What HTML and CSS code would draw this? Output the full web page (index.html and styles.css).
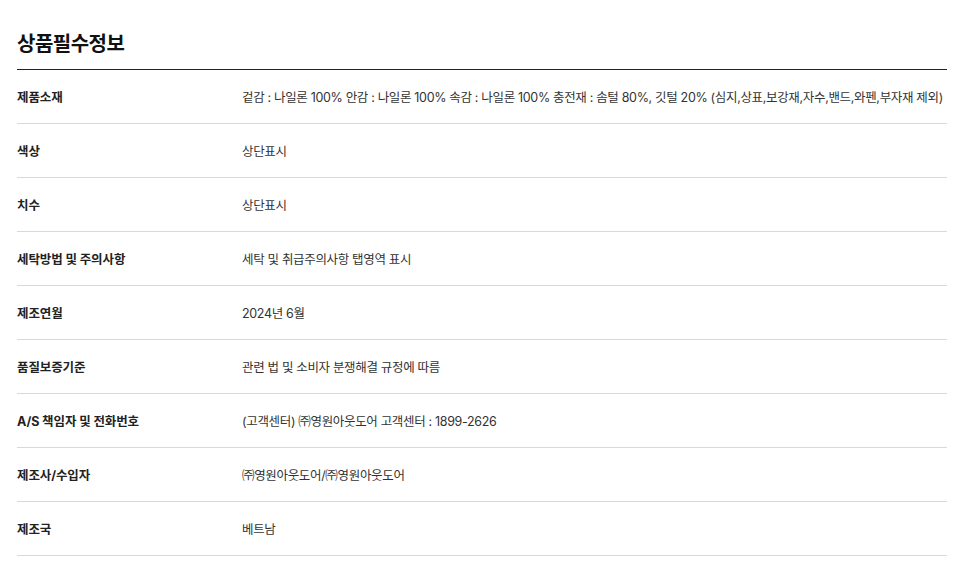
FILE: index.html
```html
<!DOCTYPE html>
<html lang="ko">
<head>
<meta charset="utf-8">
<link rel="stylesheet" href="styles.css">
</head>
<body>
<section class="info">
  <h2 class="title">상품필수정보</h2>
  <div class="rows">
    <div class="row"><div class="label">제품소재</div><div class="value">겉감 : 나일론 100% 안감 : 나일론 100% 속감 : 나일론 100% 충전재 : 솜털 80%, 깃털 20% (심지,상표,보강재,자수,밴드,와펜,부자재 제외)</div></div>
    <div class="row"><div class="label">색상</div><div class="value">상단표시</div></div>
    <div class="row"><div class="label">치수</div><div class="value">상단표시</div></div>
    <div class="row"><div class="label">세탁방법 및 주의사항</div><div class="value">세탁 및 취급주의사항 탭영역 표시</div></div>
    <div class="row"><div class="label">제조연월</div><div class="value">2024년 6월</div></div>
    <div class="row"><div class="label">품질보증기준</div><div class="value">관련 법 및 소비자 분쟁해결 규정에 따름</div></div>
    <div class="row"><div class="label">A/S 책임자 및 전화번호</div><div class="value">(고객센터) ㈜영원아웃도어 고객센터 : 1899-2626</div></div>
    <div class="row"><div class="label">제조사/수입자</div><div class="value">㈜영원아웃도어/㈜영원아웃도어</div></div>
    <div class="row"><div class="label">제조국</div><div class="value">베트남</div></div>
  </div>
</section>
</body>
</html>
```

FILE: styles.css
```css
html, body {
  margin: 0;
  padding: 0;
  background: #fff;
}
body {
  font-family: "Inter", "Noto Sans CJK KR", sans-serif;
  color: #222;
}
.info {
  width: 930px;
  margin-left: 17px;
}
.title {
  margin: 0;
  padding: 31px 0 12px;
  font-size: 20px;
  line-height: 26px;
  font-weight: 700;
  letter-spacing: -0.5px;
  color: #111;
  border-bottom: 1px solid #222;
}
.row {
  display: flex;
  align-items: center;
  height: 53px;
  border-bottom: 1px solid #d9d9d9;
}
.label {
  width: 225px;
  flex: none;
  font-size: 12.5px;
  font-weight: 700;
  letter-spacing: -0.1px;
  color: #222;
}
.value {
  font-size: 12.5px;
  letter-spacing: -0.33px;
  color: #333;
}
```
